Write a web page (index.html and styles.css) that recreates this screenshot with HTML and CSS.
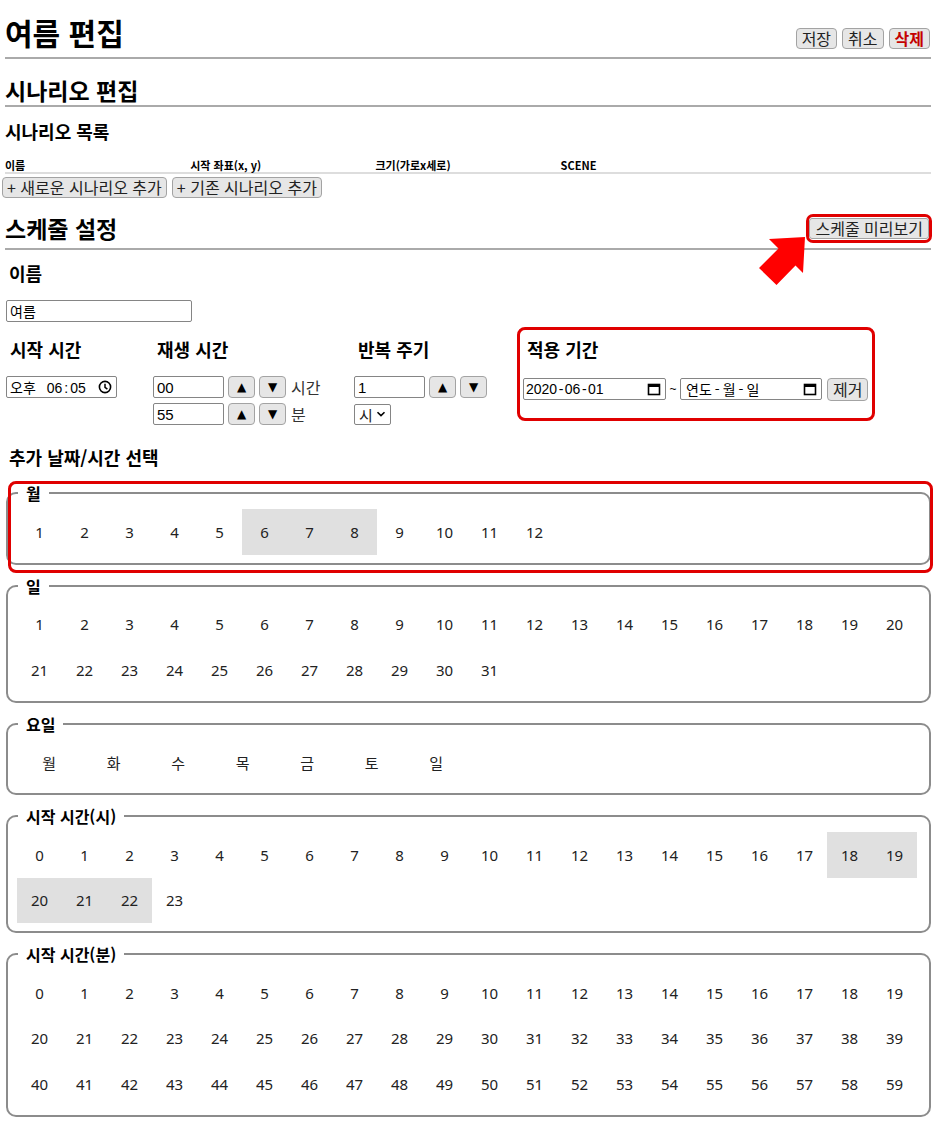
FILE: index.html
```html
<!DOCTYPE html>
<html lang="ko">
<head>
<meta charset="utf-8">
<title>여름 편집</title>
<link rel="stylesheet" href="styles.css">
</head>
<body>
<header class="page-head">
  <h1 class="page-title">여름 편집</h1>
  <div class="actions">
    <button class="btn">저장</button>
    <button class="btn">취소</button>
    <button class="btn btn-danger">삭제</button>
  </div>
</header>

<section class="scenario">
  <h2 class="section-title">시나리오 편집</h2>
  <h3 class="sub-title">시나리오 목록</h3>
  <div class="scenario-table">
    <div class="th">이름</div>
    <div class="th">시작 좌표(x, y)</div>
    <div class="th">크기(가로x세로)</div>
    <div class="th">SCENE</div>
    <div class="th"></div>
  </div>
  <div class="add-row">
    <button class="btn add-btn">+ 새로운 시나리오 추가</button>
    <button class="btn add-btn">+ 기존 시나리오 추가</button>
  </div>
</section>

<section class="schedule">
  <div class="section-head">
    <h2 class="section-head-title">스케줄 설정</h2>
    <span class="mark-box"><button class="btn preview-btn">스케줄 미리보기</button></span>
    <svg class="arrow" width="50" height="50" viewBox="0 0 50 50" aria-hidden="true">
      <polygon points="48,2 46,38 38.5,30.5 19.5,50 2,33 21.5,13.5 12,4" fill="#ff0000"/>
    </svg>
  </div>

  <div class="field">
    <h4 class="label">이름</h4>
    <input class="text-input name-input" type="text" value="여름">
  </div>

  <div class="field-row">
    <div class="group g-start">
      <h4 class="label">시작 시간</h4>
      <div class="fake-input time-input">
        <span class="time-text">오후<span class="time-num">06<span class="sep">:</span>05</span></span>
        <svg class="ico" width="14" height="14" viewBox="0 0 14 14" aria-hidden="true">
          <circle cx="7" cy="7" r="5.6" fill="none" stroke="#000" stroke-width="1.6"/>
          <path d="M7 3.8 V7.3 L9.4 9.2" fill="none" stroke="#000" stroke-width="1.5"/>
        </svg>
      </div>
    </div>

    <div class="group g-duration">
      <h4 class="label">재생 시간</h4>
      <div class="spin-row">
        <input class="text-input num-input" type="text" value="00">
        <button class="btn spin">▲</button>
        <button class="btn spin">▼</button>
        <span class="unit">시간</span>
      </div>
      <div class="spin-row">
        <input class="text-input num-input" type="text" value="55">
        <button class="btn spin">▲</button>
        <button class="btn spin">▼</button>
        <span class="unit">분</span>
      </div>
    </div>

    <div class="group g-repeat">
      <h4 class="label">반복 주기</h4>
      <div class="spin-row">
        <input class="text-input num-input" type="text" value="1">
        <button class="btn spin">▲</button>
        <button class="btn spin">▼</button>
      </div>
      <div class="spin-row">
        <div class="fake-select">
          <span>시</span>
          <svg width="10" height="8" viewBox="0 0 10 8" aria-hidden="true">
            <path d="M1.5 2.2 L5 5.6 L8.5 2.2" fill="none" stroke="#000" stroke-width="1.6"/>
          </svg>
        </div>
      </div>
    </div>

    <div class="group g-period">
      <h4 class="label">적용 기간</h4>
      <div class="period-row">
        <div class="fake-input date-input">
          <span class="date-text">2020<span class="sep">-</span>06<span class="sep">-</span>01</span>
          <svg class="ico" width="14" height="14" viewBox="0 0 14 14" aria-hidden="true">
            <rect x="1.5" y="2.5" width="11" height="10" fill="none" stroke="#000" stroke-width="1.6"/>
            <rect x="1" y="2" width="12" height="3" fill="#000"/>
          </svg>
        </div>
        <span class="tilde">~</span>
        <div class="fake-input date-input">
          <span class="date-text ko">연도<span class="sep">-</span>월<span class="sep">-</span>일</span>
          <svg class="ico" width="14" height="14" viewBox="0 0 14 14" aria-hidden="true">
            <rect x="1.5" y="2.5" width="11" height="10" fill="none" stroke="#000" stroke-width="1.6"/>
            <rect x="1" y="2" width="12" height="3" fill="#000"/>
          </svg>
        </div>
        <button class="btn remove-btn">제거</button>
      </div>
    </div>
  </div>

  <h4 class="label extra-title">추가 날짜/시간 선택</h4>

  <div class="highlight-wrap">
    <fieldset class="pick">
      <legend>월</legend>
      <div class="cells">
        <span class="cell">1</span><span class="cell">2</span><span class="cell">3</span><span class="cell">4</span><span class="cell">5</span><span class="cell on">6</span><span class="cell on">7</span><span class="cell on">8</span><span class="cell">9</span><span class="cell">10</span><span class="cell">11</span><span class="cell">12</span>
      </div>
    </fieldset>
  </div>

  <fieldset class="pick">
    <legend>일</legend>
    <div class="cells">
      <span class="cell">1</span><span class="cell">2</span><span class="cell">3</span><span class="cell">4</span><span class="cell">5</span><span class="cell">6</span><span class="cell">7</span><span class="cell">8</span><span class="cell">9</span><span class="cell">10</span><span class="cell">11</span><span class="cell">12</span><span class="cell">13</span><span class="cell">14</span><span class="cell">15</span><span class="cell">16</span><span class="cell">17</span><span class="cell">18</span><span class="cell">19</span><span class="cell">20</span><span class="cell">21</span><span class="cell">22</span><span class="cell">23</span><span class="cell">24</span><span class="cell">25</span><span class="cell">26</span><span class="cell">27</span><span class="cell">28</span><span class="cell">29</span><span class="cell">30</span><span class="cell">31</span>
    </div>
  </fieldset>

  <fieldset class="pick">
    <legend>요일</legend>
    <div class="cells cells-wide">
      <span class="cell">월</span><span class="cell">화</span><span class="cell">수</span><span class="cell">목</span><span class="cell">금</span><span class="cell">토</span><span class="cell">일</span>
    </div>
  </fieldset>

  <fieldset class="pick">
    <legend>시작 시간(시)</legend>
    <div class="cells">
      <span class="cell">0</span><span class="cell">1</span><span class="cell">2</span><span class="cell">3</span><span class="cell">4</span><span class="cell">5</span><span class="cell">6</span><span class="cell">7</span><span class="cell">8</span><span class="cell">9</span><span class="cell">10</span><span class="cell">11</span><span class="cell">12</span><span class="cell">13</span><span class="cell">14</span><span class="cell">15</span><span class="cell">16</span><span class="cell">17</span><span class="cell on">18</span><span class="cell on">19</span><span class="cell on">20</span><span class="cell on">21</span><span class="cell on">22</span><span class="cell">23</span>
    </div>
  </fieldset>

  <fieldset class="pick">
    <legend>시작 시간(분)</legend>
    <div class="cells">
      <span class="cell">0</span><span class="cell">1</span><span class="cell">2</span><span class="cell">3</span><span class="cell">4</span><span class="cell">5</span><span class="cell">6</span><span class="cell">7</span><span class="cell">8</span><span class="cell">9</span><span class="cell">10</span><span class="cell">11</span><span class="cell">12</span><span class="cell">13</span><span class="cell">14</span><span class="cell">15</span><span class="cell">16</span><span class="cell">17</span><span class="cell">18</span><span class="cell">19</span><span class="cell">20</span><span class="cell">21</span><span class="cell">22</span><span class="cell">23</span><span class="cell">24</span><span class="cell">25</span><span class="cell">26</span><span class="cell">27</span><span class="cell">28</span><span class="cell">29</span><span class="cell">30</span><span class="cell">31</span><span class="cell">32</span><span class="cell">33</span><span class="cell">34</span><span class="cell">35</span><span class="cell">36</span><span class="cell">37</span><span class="cell">38</span><span class="cell">39</span><span class="cell">40</span><span class="cell">41</span><span class="cell">42</span><span class="cell">43</span><span class="cell">44</span><span class="cell">45</span><span class="cell">46</span><span class="cell">47</span><span class="cell">48</span><span class="cell">49</span><span class="cell">50</span><span class="cell">51</span><span class="cell">52</span><span class="cell">53</span><span class="cell">54</span><span class="cell">55</span><span class="cell">56</span><span class="cell">57</span><span class="cell">58</span><span class="cell">59</span>
    </div>
  </fieldset>
</section>
</body>
</html>
```

FILE: styles.css
```css
* { box-sizing: border-box; }

html, body { background: #fff; }

body {
  margin: 0;
  padding: 5px 5px 0 5px;
  font-family: "Noto Sans CJK KR", "Noto Sans", sans-serif;
  color: #000;
}

/* ---------- buttons ---------- */
.btn {
  font-family: "Noto Sans CJK KR", "Noto Sans", sans-serif;
  font-size: 16px;
  line-height: 17px;
  height: 21px;
  padding: 0 5px;
  margin: 0;
  color: #222;
  background: #e6e6e6;
  border: 1px solid #a3a3a3;
  border-radius: 4px;
  display: inline-flex;
  align-items: center;
  justify-content: center;
}
.btn-danger { color: #c40000; font-weight: 700; }
.add-btn { padding: 0 4px; }

/* ---------- page head ---------- */
.page-head {
  display: flex;
  justify-content: space-between;
  align-items: flex-end;
  padding-top: 9px;
  padding-bottom: 7px;
  border-bottom: 2px solid #aaa;
}
.page-title {
  margin: 0;
  font-size: 30px;
  line-height: 36px;
  font-weight: 700;
}
.actions {
  display: flex;
  gap: 5px;
  margin-right: 1px;
  margin-bottom: 1px;
}

/* ---------- scenario ---------- */
.section-title {
  margin: 17px 0 0;
  font-size: 23px;
  line-height: 28px;
  font-weight: 700;
  padding-bottom: 1px;
  border-bottom: 2px solid #aaa;
}
.sub-title {
  margin: 13px 0 0;
  font-size: 18px;
  line-height: 22px;
  font-weight: 700;
}
.scenario-table {
  margin-top: 16px;
  display: grid;
  grid-template-columns: repeat(5, 1fr);
  border-bottom: 2px solid #ddd;
}
.th {
  font-size: 11px;
  line-height: 14px;
  font-weight: 700;
}
.add-row {
  margin: 3px 0 0 -3px;
  display: flex;
  gap: 5px;
}

/* ---------- schedule head ---------- */
.section-head {
  position: relative;
  margin-top: 16px;
  display: flex;
  justify-content: space-between;
  align-items: flex-start;
  padding-bottom: 5px;
  border-bottom: 2px solid #aaa;
}
.section-head-title {
  margin: 0;
  font-size: 23px;
  line-height: 28px;
  font-weight: 700;
}
.mark-box {
  display: inline-flex;
  padding: 1px 0;
  margin-right: -1px;
  border: 3px solid #e00000;
  border-radius: 7px;
}
.preview-btn {
  padding: 0 5px;
  border-radius: 3px;
}
.arrow {
  position: absolute;
  right: 124px;
  top: 21px;
}

/* ---------- form ---------- */
.label {
  margin: 0;
  font-size: 18px;
  line-height: 20px;
  font-weight: 700;
  padding-left: 4px;
}
.field { margin-top: 13px; }
.field .label { margin-bottom: 17px; }

.text-input {
  display: block;
  height: 22px;
  margin: 0;
  padding: 0 3px;
  border: 1px solid #858585;
  border-radius: 2px;
  background: #fff;
  color: #000;
  outline: none;
}
.name-input {
  width: 186px;
  margin-left: 1px;
  font-family: "Noto Sans CJK KR", sans-serif;
  font-size: 14px;
}

.field-row {
  margin-top: 5px;
  display: flex;
  align-items: flex-start;
}
.group { padding-top: 12px; }
.group .label { margin-bottom: 17px; }
.g-start { width: 148px; padding-left: 1px; }
.g-duration { width: 201px; }
.g-repeat { width: 163px; }
.g-period {
  width: 358px;
  padding: 9px 3px 17px 3px;
  border: 3px solid #e00000;
  border-radius: 8px;
}
.g-period .label { padding-left: 4px; }

.fake-input {
  display: flex;
  align-items: center;
  justify-content: space-between;
  height: 22px;
  border: 1px solid #858585;
  border-radius: 2px;
  background: #fff;
}
.time-input {
  width: 111px;
  padding: 0 4px 0 3px;
}
.time-text {
  font-family: "Noto Sans CJK KR", sans-serif;
  font-size: 14px;
  white-space: pre;
}
.time-num {
  font-family: "Liberation Sans", Arial, sans-serif;
  font-size: 14px;
  margin-left: 11px;
}
.time-num .sep { margin: 0 2px; }
.ico { flex: none; }

.spin-row {
  display: flex;
  align-items: center;
  gap: 4px;
  height: 22px;
}
.spin-row + .spin-row { margin-top: 5px; }
.num-input {
  width: 71px;
  font-family: "Liberation Sans", Arial, sans-serif;
  font-size: 15px;
}
.spin {
  width: 27px;
  height: 22px;
  padding: 0;
  font-family: "DejaVu Sans", sans-serif;
  font-size: 12px;
  color: #000;
}
.unit {
  margin-left: 1px;
  font-size: 16px;
  color: #333;
}

.fake-select {
  display: flex;
  align-items: center;
  gap: 3px;
  width: 37px;
  height: 21px;
  padding: 0 3px 0 4px;
  border: 1px solid #858585;
  border-radius: 2px;
  font-size: 15px;
  color: #222;
}

.period-row {
  display: flex;
  align-items: center;
  height: 25px;
}
.date-input {
  width: 143px;
  padding: 0 4px 0 2px;
}
.date-input + .tilde + .date-input { width: 142px; }
.date-text {
  font-family: "Liberation Sans", Arial, sans-serif;
  font-size: 14px;
}
.date-text .sep { margin: 0 1.5px; }
.date-text.ko {
  font-family: "Noto Sans CJK KR", sans-serif;
  padding-left: 3px;
}
.date-text.ko .sep { margin: 0 3px; }
.tilde {
  width: 14px;
  text-align: center;
  font-family: "Liberation Sans", Arial, sans-serif;
  font-size: 12px;
}
.remove-btn {
  margin-left: 5px;
  height: 23px;
  margin-top: 2px;
}

.extra-title { margin-top: 22px; }

/* ---------- pickers ---------- */
.highlight-wrap {
  position: relative;
  margin-top: 16px;
}
.highlight-wrap::after {
  content: "";
  position: absolute;
  left: 3px;
  right: -2px;
  top: -2px;
  bottom: -8px;
  border: 3px solid #e00000;
  border-radius: 8px;
  pointer-events: none;
}
.highlight-wrap .pick { margin-top: 0; }

.pick {
  margin: 11px 0 0 1px;
  padding: 6px 9px 8px 9px;
  border: 2px solid #8c8c8c;
  border-radius: 10px;
  min-width: 0;
}
.pick legend {
  margin-left: 1px;
  padding: 0 8px;
  font-size: 16px;
  line-height: 20px;
  font-weight: 700;
}
.cells {
  display: flex;
  flex-wrap: wrap;
}
.cell {
  width: 45px;
  height: 45.5px;
  display: flex;
  align-items: center;
  justify-content: center;
  font-family: "Noto Sans", "Noto Sans CJK KR", sans-serif;
  font-size: 15px;
  color: #222;
}
.cell.on { background: #e0e0e0; }
.cells-wide .cell {
  width: 64.5px;
  font-family: "Noto Sans CJK KR", sans-serif;
}
```
